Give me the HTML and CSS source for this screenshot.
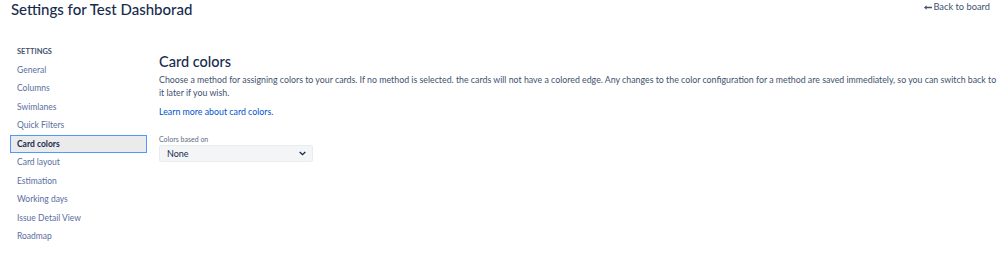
FILE: index.html
```html
<!DOCTYPE html>
<html>
<head>
<meta charset="utf-8">
<link rel="stylesheet" href="styles.css">
</head>
<body>
<header class="top">
  <h1 class="title">Settings for Test Dashborad</h1>
  <a class="back" href="#"><svg class="back-icon" viewBox="0 0 10 6" width="8" height="5"><path d="M0 3 L3.2 0.2 L3.2 2.2 L10 2.2 L10 3.8 L3.2 3.8 L3.2 5.8 Z" fill="#42526e"/></svg>Back to board</a>
</header>
<div class="layout">
  <nav class="side">
    <div class="side-head">SETTINGS</div>
    <a class="nav-item" href="#">General</a>
    <a class="nav-item" href="#">Columns</a>
    <a class="nav-item" href="#">Swimlanes</a>
    <a class="nav-item" href="#">Quick Filters</a>
    <a class="nav-item active" href="#">Card colors</a>
    <a class="nav-item" href="#">Card layout</a>
    <a class="nav-item" href="#">Estimation</a>
    <a class="nav-item" href="#">Working days</a>
    <a class="nav-item" href="#">Issue Detail View</a>
    <a class="nav-item" href="#">Roadmap</a>
  </nav>
  <main class="main">
    <h2 class="heading">Card colors</h2>
    <p class="desc">Choose a method for assigning colors to your cards. If no method is selected. the cards will not have a colored edge. Any changes to the color configuration for a method are saved immediately, so you can switch back to it later if you wish.</p>
    <a class="learn" href="#">Learn more about card colors.</a>
    <label class="field-label">Colors based on</label>
    <div class="select">
      <span>None</span>
      <svg class="chev" viewBox="0 0 8 5" width="7" height="5"><path d="M0.8 0.8 L4 3.8 L7.2 0.8" fill="none" stroke="#172b4d" stroke-width="1.6"/></svg>
    </div>
  </main>
</div>
</body>
</html>
```
FILE: styles.css
```css
* { box-sizing: border-box; }
html, body { margin: 0; padding: 0; background: #fff; }
body {
  font-family: "Lato", "Open Sans", sans-serif;
  color: #172b4d;
  width: 999px;
  height: 256px;
  overflow: hidden;
}
a { text-decoration: none; }
.top {
  display: flex;
  justify-content: space-between;
  align-items: flex-start;
  padding: 0 9px 0 11px;
  height: 40px;
}
.title {
  margin: 0;
  font-size: 15px;
  font-weight: 500;
  line-height: 18px;
  color: #172b4d;
}
.back {
  display: flex;
  align-items: center;
  gap: 1px;
  font-size: 9.3px;
  line-height: 12px;
  margin-top: 1px;
  color: #42526e;
}
.back-icon { display: block; }
.layout {
  display: flex;
}
.side {
  width: 149px;
  padding-left: 10px;
  display: flex;
  flex-direction: column;
}
.side-head {
  font-size: 7.5px;
  font-weight: 700;
  color: #42526e;
  padding-left: 7px;
  line-height: 12px;
  height: 21px;
  padding-top: 6px;
}
.nav-item {
  display: block;
  font-size: 8.5px;
  line-height: 16.5px;
  height: 18.45px;
  padding-left: 6px;
  color: #5a6ea0;
  border: 1px solid transparent;
  margin-right: 2px;
}
.nav-item.active {
  background: #ebebeb;
  border-color: #4c9aff;
  color: #172b4d;
  font-weight: 700;
}
.main {
  padding-left: 10px;
  padding-top: 13px;
  flex: 1;
}
.heading {
  margin: 0;
  font-size: 14.5px;
  font-weight: 500;
  line-height: 18px;
}
.desc {
  margin: 3px 0 0;
  font-size: 8.8px;
  line-height: 12.5px;
  color: #42526e;
}
.learn {
  display: block;
  margin-top: 7px;
  font-size: 8.8px;
  line-height: 12px;
  color: #0052cc;
}
.field-label {
  display: block;
  margin-top: 17px;
  font-size: 7px;
  line-height: 9px;
  color: #5e6c84;
}
.select {
  margin-top: 1px;
  width: 154px;
  height: 17px;
  background: #f4f5f7;
  border: 1px solid #ebecf0;
  border-radius: 2px;
  display: flex;
  align-items: center;
  justify-content: space-between;
  padding: 0 6px 0 7px;
  font-size: 9px;
  color: #172b4d;
}
.chev { display: block; }
```
